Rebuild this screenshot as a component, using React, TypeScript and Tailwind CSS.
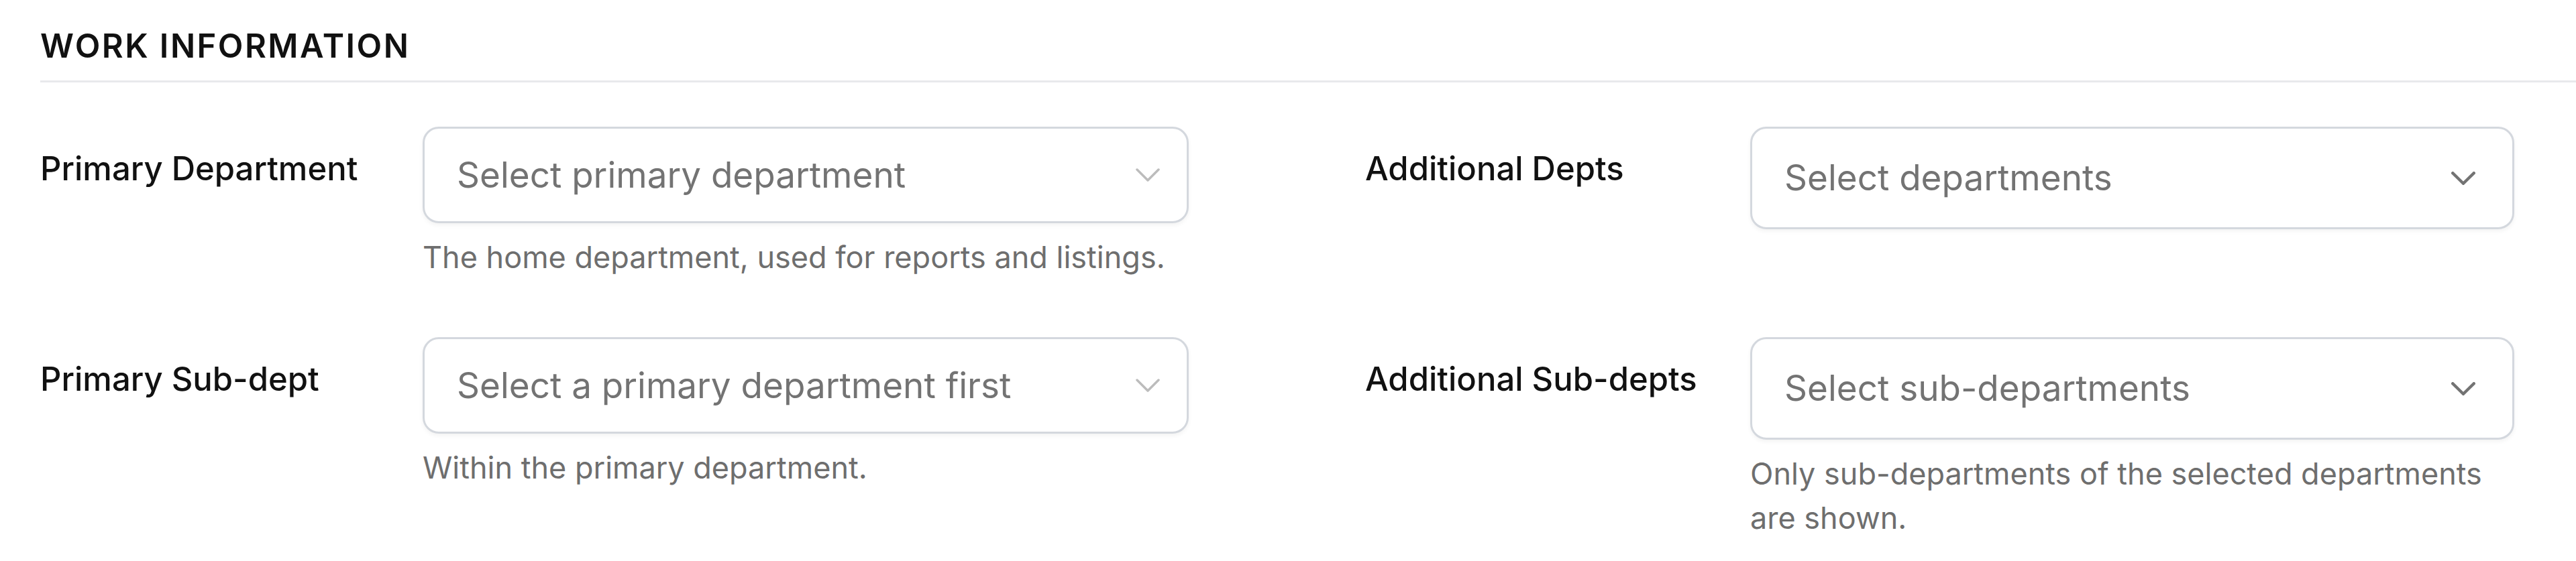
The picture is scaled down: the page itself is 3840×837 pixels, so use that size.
import React from "react";

function LightChevron() {
  return (
    <svg width="36" height="20" viewBox="0 0 36 20" fill="none" className="shrink-0">
      <polyline points="2,2 18,18 34,2" stroke="#bcbcbc" strokeWidth="3.5" strokeLinecap="round" strokeLinejoin="round" />
    </svg>
  );
}

function DarkChevron() {
  return (
    <svg width="36" height="20" viewBox="0 0 36 20" fill="none" className="shrink-0">
      <polyline points="2.25,2.25 18,17.75 33.75,2.25" stroke="#737373" strokeWidth="4.5" strokeLinecap="round" strokeLinejoin="round" />
    </svg>
  );
}

function NativeSelect({ placeholder }: { placeholder: string }) {
  return (
    <div className="flex h-[144px] items-center justify-between rounded-[24px] border-[3px] border-[#d4d8de] bg-white pl-[48px] pr-[40px] shadow-[0_3px_6px_rgba(0,0,0,0.05)]">
      <span className="text-[53px] leading-none text-[#737373]">{placeholder}</span>
      <LightChevron />
    </div>
  );
}

function MultiSelect({ placeholder }: { placeholder: string }) {
  return (
    <div className="flex h-[153px] items-center justify-between rounded-[24px] border-[3px] border-[#d4d8de] bg-white pl-[48px] pr-[55px] shadow-[0_3px_6px_rgba(0,0,0,0.05)]">
      <span className="text-[53px] leading-none text-[#737373]">{placeholder}</span>
      <DarkChevron />
    </div>
  );
}

function Helper({ children }: { children: React.ReactNode }) {
  return <p className="mt-[18px] text-[45px] leading-[66px] text-[#6e6e6e]">{children}</p>;
}

function Label({ children, w }: { children: React.ReactNode; w: string }) {
  return (
    <div className={`${w} shrink-0 pt-[27px] text-[49px] font-medium leading-[72px] text-[#111111]`}>{children}</div>
  );
}

export default function App() {
  return (
    <div className="min-h-screen bg-white pl-[60px] pt-[33px] font-['Inter',sans-serif] antialiased">
      <div className="border-b-[3px] border-[#e8e9ec] pb-[15px]">
        <h2 className="text-[49px] font-semibold uppercase leading-[72px] tracking-[0.05em] text-[#111111]">
          Work Information
        </h2>
      </div>
      <div className="mt-[66px] grid grid-cols-[1712px_1713px] gap-x-[263px] gap-y-[86px]">
        <div className="flex items-start">
          <Label w="w-[570px]">Primary Department</Label>
          <div className="flex min-w-0 flex-1 flex-col">
            <NativeSelect placeholder="Select primary department" />
            <Helper>The home department, used for reports and listings.</Helper>
          </div>
        </div>
        <div className="flex items-start">
          <Label w="w-[574px]">Additional Depts</Label>
          <div className="flex min-w-0 flex-1 flex-col">
            <MultiSelect placeholder="Select departments" />
          </div>
        </div>
        <div className="flex items-start">
          <Label w="w-[570px]">Primary Sub-dept</Label>
          <div className="flex min-w-0 flex-1 flex-col">
            <NativeSelect placeholder="Select a primary department first" />
            <Helper>Within the primary department.</Helper>
          </div>
        </div>
        <div className="flex items-start">
          <Label w="w-[574px]">Additional Sub-depts</Label>
          <div className="flex min-w-0 flex-1 flex-col">
            <MultiSelect placeholder="Select sub-departments" />
            <Helper>Only sub-departments of the selected departments are shown.</Helper>
          </div>
        </div>
      </div>
    </div>
  );
}
